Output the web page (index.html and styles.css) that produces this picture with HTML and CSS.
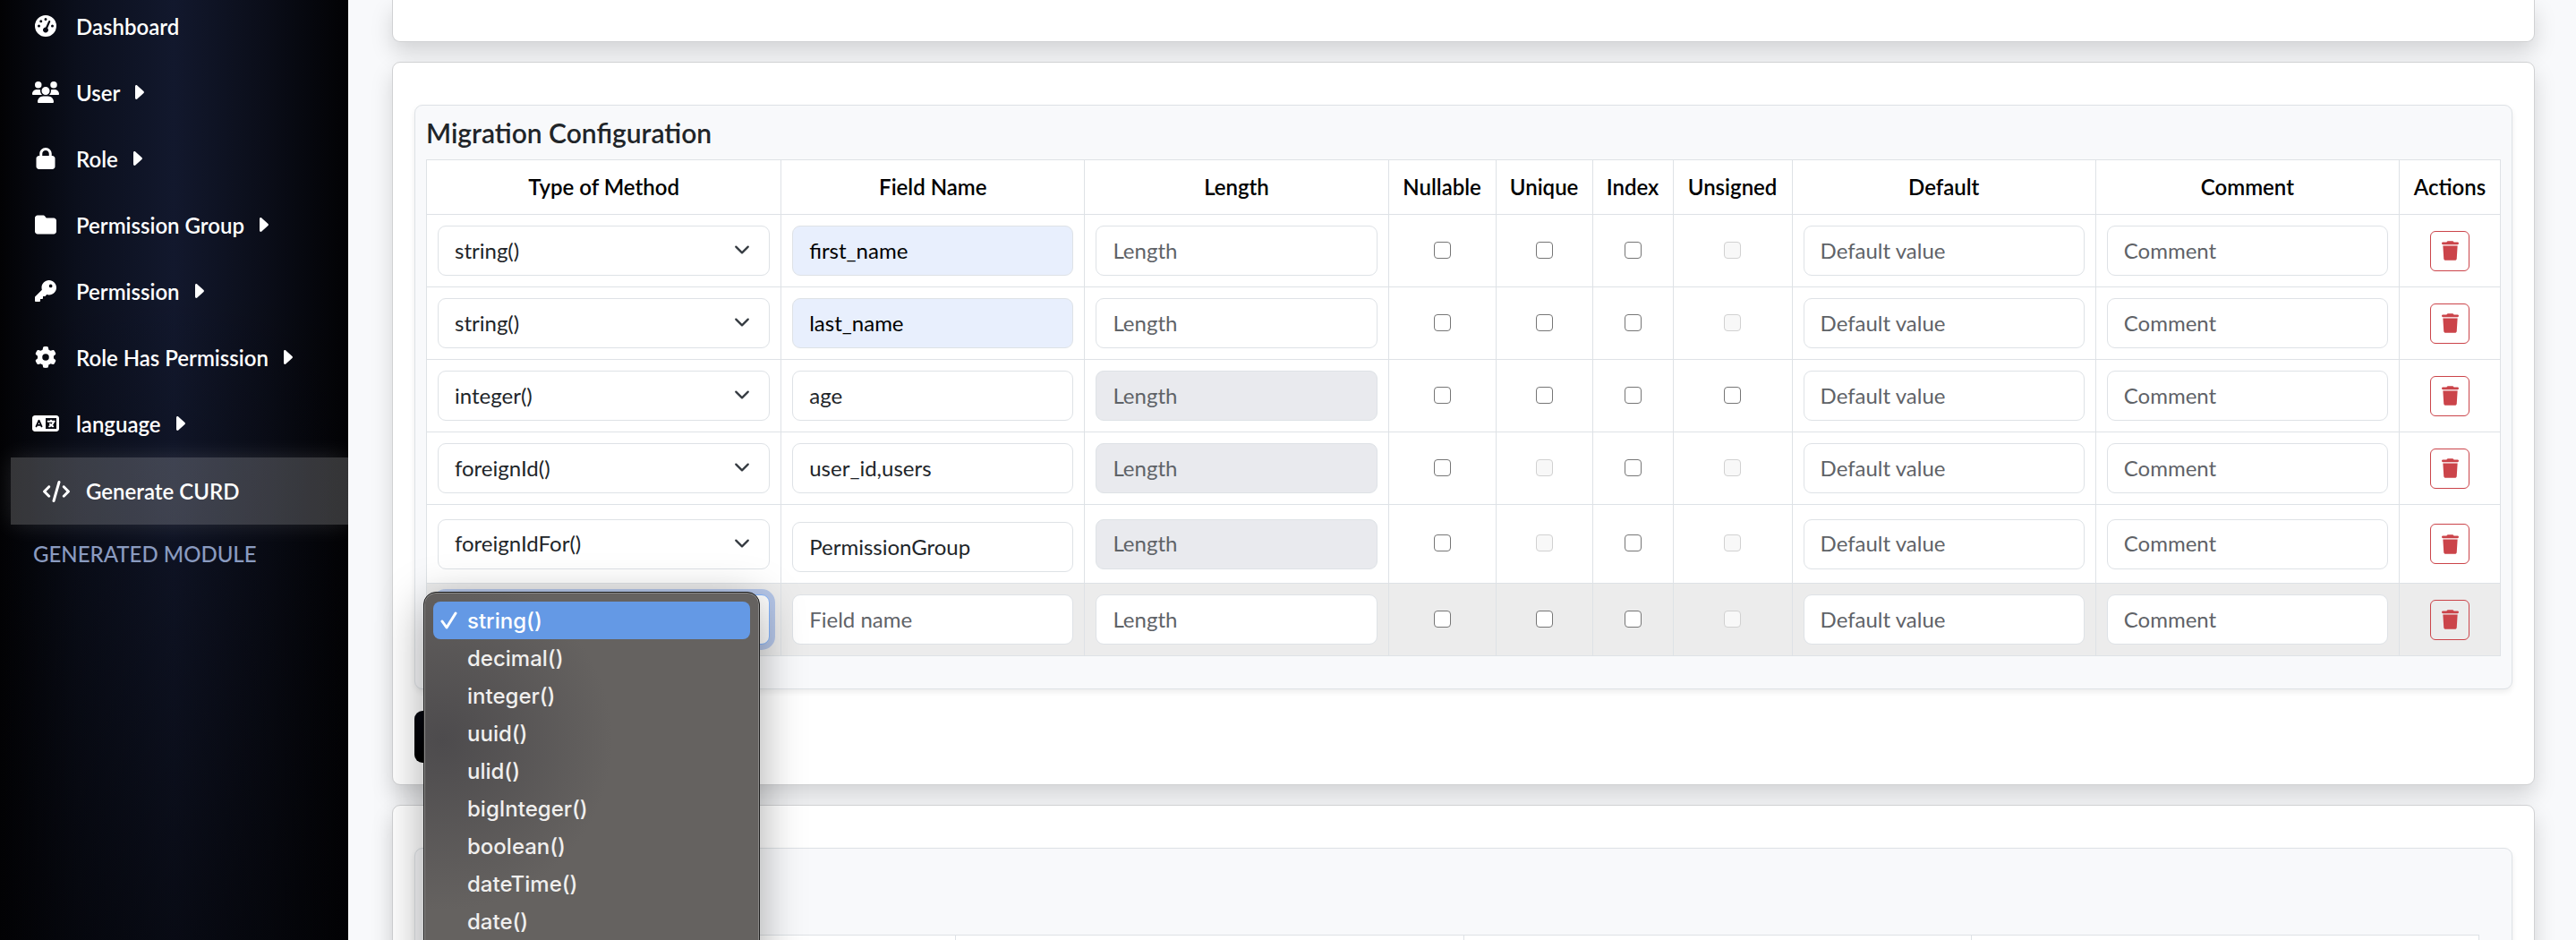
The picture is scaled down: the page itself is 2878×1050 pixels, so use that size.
FILE: index.html
```html
<!DOCTYPE html>
<html lang="en">
<head>
<meta charset="utf-8">
<title>Generate CURD</title>
<link rel="stylesheet" href="styles.css">
</head>
<body>
<svg class="sprite" aria-hidden="true">
  <symbol id="i-gauge" viewBox="0 0 512 512"><path fill-rule="evenodd" d="M0 256a256 256 0 1 1 512 0A256 256 0 1 1 0 256zM288 96a32 32 0 1 0-64 0 32 32 0 1 0 64 0zM256 416c35.300 0 64-28.700 64-64 0-17.400-6.900-33.100-18.100-44.600L366 161.700c5.300-12.100-.2-26.300-12.300-31.600s-26.300.2-31.600 12.300L257.900 288c-.6 0-1.300 0-1.900 0-35.300 0-64 28.700-64 64s28.700 64 64 64zM176 144a32 32 0 1 0-64 0 32 32 0 1 0 64 0zM96 288a32 32 0 1 0 0-64 32 32 0 1 0 0 64zm352-32a32 32 0 1 0-64 0 32 32 0 1 0 64 0z"/></symbol>
  <symbol id="i-users" viewBox="0 0 640 512"><path d="M144 0a80 80 0 1 1 0 160A80 80 0 1 1 144 0zM512 0a80 80 0 1 1 0 160A80 80 0 1 1 512 0zM0 298.700C0 239.800 47.800 192 106.700 192h42.700c15.900 0 31 3.500 44.600 9.700-1.300 7.200-1.900 14.700-1.900 22.300 0 38.200 16.800 72.500 43.300 96H21.300C9.600 320 0 310.400 0 298.700zM405.300 320h-.7c26.600-23.500 43.300-57.800 43.300-96 0-7.600-.7-15-1.900-22.300 13.600-6.300 28.700-9.700 44.600-9.700h42.700C592.200 192 640 239.800 640 298.700c0 11.800-9.600 21.300-21.300 21.300H405.300zM224 224a96 96 0 1 1 192 0 96 96 0 1 1-192 0zM128 485.300C128 411.700 187.700 352 261.300 352h117.400C452.300 352 512 411.700 512 485.300c0 14.700-11.900 26.700-26.700 26.700H154.700c-14.700 0-26.700-11.900-26.700-26.700z"/></symbol>
  <symbol id="i-lock" viewBox="0 0 448 512"><path fill-rule="evenodd" d="M144 144v48h160v-48c0-44.200-35.800-80-80-80s-80 35.800-80 80zm-64 48v-48C80 64.500 144.500 0 224 0s144 64.500 144 144v48h16c35.300 0 64 28.700 64 64v192c0 35.300-28.700 64-64 64H64c-35.300 0-64-28.700-64-64V256c0-35.300 28.700-64 64-64h16z"/></symbol>
  <symbol id="i-folder" viewBox="0 0 512 512"><path d="M64 480h384c35.300 0 64-28.700 64-64V160c0-35.300-28.700-64-64-64H288c-10.100 0-19.600-4.700-25.600-12.800L243.200 57.600C231.100 41.500 212.100 32 192 32H64C28.700 32 0 60.700 0 96v320c0 35.300 28.700 64 64 64z"/></symbol>
  <symbol id="i-key" viewBox="0 0 512 512"><path fill-rule="evenodd" d="M336 352c97.200 0 176-78.800 176-176S433.200 0 336 0 160 78.800 160 176c0 18.700 2.900 36.800 8.300 53.700L7 391c-4.500 4.500-7 10.600-7 17v80c0 13.300 10.700 24 24 24h80c13.300 0 24-10.700 24-24v-40h40c13.300 0 24-10.700 24-24v-40h40c6.400 0 12.500-2.500 17-7l33.300-33.300c16.900 5.400 35 8.300 53.700 8.300zM376 96a40 40 0 1 1 0 80 40 40 0 1 1 0-80z"/></symbol>
  <symbol id="i-gear" viewBox="0 0 512 512"><path fill-rule="evenodd" d="M495.900 166.600c3.200 8.700.5 18.400-6.400 24.600l-43.300 39.400c1.100 8.300 1.700 16.800 1.700 25.400s-.6 17.100-1.700 25.400l43.300 39.400c6.900 6.200 9.600 15.900 6.400 24.600-4.400 11.900-9.700 23.300-15.800 34.300l-4.700 8.100c-6.600 11-14 21.400-22.100 31.200-5.900 7.200-15.700 9.600-24.500 6.800l-55.700-17.700c-13.400 10.300-28.200 18.900-44 25.400l-12.500 57.100c-2 9.100-9 16.300-18.200 17.800-13.800 2.300-28 3.500-42.500 3.500s-28.700-1.200-42.500-3.500c-9.200-1.500-16.200-8.700-18.200-17.800l-12.500-57.100c-15.800-6.500-30.600-15.100-44-25.400L83.100 425.900c-8.800 2.800-18.600.3-24.500-6.800-8.100-9.800-15.500-20.200-22.100-31.200l-4.700-8.100c-6.100-11-11.400-22.400-15.800-34.300-3.200-8.700-.5-18.400 6.400-24.600l43.300-39.400C64.600 273.100 64 264.600 64 256s.6-17.100 1.700-25.400L22.400 191.200c-6.900-6.200-9.600-15.900-6.400-24.600 4.400-11.900 9.700-23.300 15.800-34.300l4.700-8.100c6.600-11 14-21.400 22.100-31.200 5.900-7.200 15.700-9.600 24.500-6.800l55.700 17.700c13.400-10.300 28.200-18.900 44-25.400l12.500-57.100c2-9.100 9-16.300 18.200-17.800C227.300 1.200 241.500 0 256 0s28.700 1.200 42.500 3.500c9.200 1.500 16.200 8.700 18.200 17.800l12.500 57.100c15.800 6.500 30.600 15.100 44 25.400l55.700-17.700c8.800-2.800 18.600-.3 24.500 6.800 8.100 9.800 15.500 20.200 22.100 31.200l4.700 8.100c6.100 11 11.400 22.400 15.800 34.300zM256 336a80 80 0 1 0 0-160 80 80 0 1 0 0 160z"/></symbol>
  <symbol id="i-language" viewBox="0 0 640 512"><path fill-rule="evenodd" d="M0 128C0 92.700 28.700 64 64 64h512c35.300 0 64 28.700 64 64v256c0 35.300-28.700 64-64 64H64c-35.300 0-64-28.700-64-64V128zm320 0v256h256V128H320zM178.300 175.900c-3.200-7.200-10.400-11.900-18.300-11.900s-15.100 4.700-18.300 11.900l-64 144c-4.500 10.100.1 21.900 10.200 26.400s21.900-.1 26.400-10.200l8.900-20.100h73.600l8.900 20.100c4.500 10.100 16.300 14.600 26.400 10.200s14.600-16.300 10.200-26.400l-64-144zM160 233.200 179 276h-38l19-42.800zM448 164c11 0 20 9 20 20v4h60c11 0 20 9 20 20s-9 20-20 20h-2l-1.600 4.500c-8.900 24.400-22.400 46.600-39.600 65.400.9.600 1.800 1.100 2.700 1.600l18.900 11.300c9.500 5.700 12.500 18 6.900 27.400s-18 12.500-27.400 6.900l-18.900-11.300c-4.500-2.700-8.800-5.500-13.100-8.500-10.600 7.500-21.900 14-34 19.400l-3.600 1.600c-10.100 4.500-21.900-.1-26.400-10.200s.1-21.900 10.200-26.400l3.600-1.600c6.400-2.900 12.600-6.100 18.500-9.800L410 286.100c-7.800-7.800-7.800-20.500 0-28.300s20.500-7.800 28.300 0l14.600 14.600.5.500c12.400-13.100 22.500-28.300 29.800-45H376c-11 0-20-9-20-20s9-20 20-20h52v-4c0-11 9-20 20-20z"/></symbol>
  <symbol id="i-code" viewBox="0 0 640 512"><path d="M392.800 1.200c-17-4.900-34.700 5-39.600 22l-128 448c-4.900 17 5 34.700 22 39.600s34.700-5 39.600-22l128-448c4.900-17-5-34.700-22-39.600zm80.600 120.100c-12.500 12.500-12.500 32.800 0 45.300l89.300 89.400-89.400 89.400c-12.500 12.500-12.500 32.800 0 45.300s32.800 12.500 45.300 0l112-112c12.500-12.500 12.500-32.800 0-45.300l-112-112c-12.500-12.500-32.800-12.500-45.300 0zm-306.700 0c-12.500-12.500-32.800-12.500-45.300 0l-112 112c-12.500 12.500-12.500 32.800 0 45.300l112 112c12.500 12.500 32.800 12.500 45.300 0s12.500-32.800 0-45.300L77.300 256l89.400-89.400c12.500-12.500 12.500-32.800 0-45.300z"/></symbol>
  <symbol id="i-caret" viewBox="0 0 10 16"><path d="M0 1.500v13c0 1.200 1.300 1.900 2.300 1L9.500 9c.6-.6.6-1.400 0-2L2.300.5C1.300-.4 0 .3 0 1.500z"/></symbol>
  <symbol id="i-trash" viewBox="0 0 448 512"><path d="M135.200 17.700 128 32H32C14.300 32 0 46.300 0 64s14.300 32 32 32h384c17.700 0 32-14.300 32-32s-14.300-32-32-32h-96l-7.200-14.300C307.400 6.800 296.300 0 284.200 0H163.800c-12.100 0-23.200 6.800-28.600 17.700zM416 128H32l21.200 339c1.600 25.300 22.600 45 47.900 45h245.800c25.300 0 46.300-19.700 47.900-45L416 128z"/></symbol>
  <symbol id="i-chevron" viewBox="0 0 16 16"><path fill="none" stroke="#343a40" stroke-linecap="round" stroke-linejoin="round" stroke-width="2" d="m2 5 6 6 6-6"/></symbol>
  <symbol id="i-check" viewBox="0 0 20 20"><path fill="none" stroke="#fff" stroke-linecap="round" stroke-linejoin="round" stroke-width="3" d="m2 11 5 7L17 2"/></symbol>
</svg>

<div class="app">
  <nav class="sidebar" aria-label="Main">
    <a class="nav-link" href="#"><svg class="nav-icon"><use href="#i-gauge"/></svg><span>Dashboard</span></a>
    <a class="nav-link" href="#"><svg class="nav-icon"><use href="#i-users"/></svg><span>User</span><svg class="caret"><use href="#i-caret"/></svg></a>
    <a class="nav-link" href="#"><svg class="nav-icon"><use href="#i-lock"/></svg><span>Role</span><svg class="caret"><use href="#i-caret"/></svg></a>
    <a class="nav-link" href="#"><svg class="nav-icon"><use href="#i-folder"/></svg><span>Permission Group</span><svg class="caret"><use href="#i-caret"/></svg></a>
    <a class="nav-link" href="#"><svg class="nav-icon"><use href="#i-key"/></svg><span>Permission</span><svg class="caret"><use href="#i-caret"/></svg></a>
    <a class="nav-link" href="#"><svg class="nav-icon"><use href="#i-gear"/></svg><span>Role Has Permission</span><svg class="caret"><use href="#i-caret"/></svg></a>
    <a class="nav-link" href="#"><svg class="nav-icon"><use href="#i-language"/></svg><span>language</span><svg class="caret"><use href="#i-caret"/></svg></a>
    <a class="nav-link active" href="#" aria-current="page"><svg class="nav-icon"><use href="#i-code"/></svg><span>Generate CURD</span></a>
    <h2 class="nav-heading">GENERATED MODULE</h2>
  </nav>

  <main class="content">
    <section class="card card-top"></section>

    <section class="card">
      <div class="panel">
        <h1 class="panel-title">Migration Configuration</h1>
        <table class="fields">
          <colgroup>
            <col class="c-type"><col><col>
            <col class="c-nullable"><col class="c-unique"><col class="c-index"><col class="c-unsigned">
            <col><col><col class="c-actions">
          </colgroup>
          <thead>
            <tr><th>Type of Method</th><th>Field Name</th><th>Length</th><th>Nullable</th><th>Unique</th><th>Index</th><th>Unsigned</th><th>Default</th><th>Comment</th><th>Actions</th></tr>
          </thead>
          <tbody>
            <tr>
              <td><div class="select"><select class="control" aria-label="Type of Method"><option>string()</option></select><svg class="chevron"><use href="#i-chevron"/></svg></div></td>
              <td><input class="control autofilled" type="text" aria-label="Field Name" placeholder="Field name" value="first_name"></td>
              <td><input class="control" type="text" aria-label="Length" placeholder="Length"></td>
              <td><input class="tick" type="checkbox" aria-label="Nullable"></td>
              <td><input class="tick" type="checkbox" aria-label="Unique"></td>
              <td><input class="tick" type="checkbox" aria-label="Index"></td>
              <td><input class="tick" type="checkbox" aria-label="Unsigned" disabled></td>
              <td><input class="control" type="text" aria-label="Default" placeholder="Default value"></td>
              <td><input class="control" type="text" aria-label="Comment" placeholder="Comment"></td>
              <td><button class="delete" type="button" aria-label="Delete row"><svg><use href="#i-trash"/></svg></button></td>
            </tr>
            <tr>
              <td><div class="select"><select class="control" aria-label="Type of Method"><option>string()</option></select><svg class="chevron"><use href="#i-chevron"/></svg></div></td>
              <td><input class="control autofilled" type="text" aria-label="Field Name" placeholder="Field name" value="last_name"></td>
              <td><input class="control" type="text" aria-label="Length" placeholder="Length"></td>
              <td><input class="tick" type="checkbox" aria-label="Nullable"></td>
              <td><input class="tick" type="checkbox" aria-label="Unique"></td>
              <td><input class="tick" type="checkbox" aria-label="Index"></td>
              <td><input class="tick" type="checkbox" aria-label="Unsigned" disabled></td>
              <td><input class="control" type="text" aria-label="Default" placeholder="Default value"></td>
              <td><input class="control" type="text" aria-label="Comment" placeholder="Comment"></td>
              <td><button class="delete" type="button" aria-label="Delete row"><svg><use href="#i-trash"/></svg></button></td>
            </tr>
            <tr>
              <td><div class="select"><select class="control" aria-label="Type of Method"><option>integer()</option></select><svg class="chevron"><use href="#i-chevron"/></svg></div></td>
              <td><input class="control" type="text" aria-label="Field Name" placeholder="Field name" value="age"></td>
              <td><input class="control" type="text" aria-label="Length" placeholder="Length" disabled></td>
              <td><input class="tick" type="checkbox" aria-label="Nullable"></td>
              <td><input class="tick" type="checkbox" aria-label="Unique"></td>
              <td><input class="tick" type="checkbox" aria-label="Index"></td>
              <td><input class="tick" type="checkbox" aria-label="Unsigned"></td>
              <td><input class="control" type="text" aria-label="Default" placeholder="Default value"></td>
              <td><input class="control" type="text" aria-label="Comment" placeholder="Comment"></td>
              <td><button class="delete" type="button" aria-label="Delete row"><svg><use href="#i-trash"/></svg></button></td>
            </tr>
            <tr>
              <td><div class="select"><select class="control" aria-label="Type of Method"><option>foreignId()</option></select><svg class="chevron"><use href="#i-chevron"/></svg></div></td>
              <td><input class="control" type="text" aria-label="Field Name" placeholder="Field name" value="user_id,users"></td>
              <td><input class="control" type="text" aria-label="Length" placeholder="Length" disabled></td>
              <td><input class="tick" type="checkbox" aria-label="Nullable"></td>
              <td><input class="tick" type="checkbox" aria-label="Unique" disabled></td>
              <td><input class="tick" type="checkbox" aria-label="Index"></td>
              <td><input class="tick" type="checkbox" aria-label="Unsigned" disabled></td>
              <td><input class="control" type="text" aria-label="Default" placeholder="Default value"></td>
              <td><input class="control" type="text" aria-label="Comment" placeholder="Comment"></td>
              <td><button class="delete" type="button" aria-label="Delete row"><svg><use href="#i-trash"/></svg></button></td>
            </tr>
            <tr>
              <td><div class="select"><select class="control" aria-label="Type of Method"><option>foreignIdFor()</option></select><svg class="chevron"><use href="#i-chevron"/></svg></div></td>
              <td class="model-cell"><input class="control" type="text" aria-label="Field Name" placeholder="Field name" value="PermissionGroup"></td>
              <td><input class="control" type="text" aria-label="Length" placeholder="Length" disabled></td>
              <td><input class="tick" type="checkbox" aria-label="Nullable"></td>
              <td><input class="tick" type="checkbox" aria-label="Unique" disabled></td>
              <td><input class="tick" type="checkbox" aria-label="Index"></td>
              <td><input class="tick" type="checkbox" aria-label="Unsigned" disabled></td>
              <td><input class="control" type="text" aria-label="Default" placeholder="Default value"></td>
              <td><input class="control" type="text" aria-label="Comment" placeholder="Comment"></td>
              <td><button class="delete" type="button" aria-label="Delete row"><svg><use href="#i-trash"/></svg></button></td>
            </tr>
            <tr class="hovered">
              <td>
                <div class="select">
                  <button class="control open" type="button" aria-haspopup="listbox" aria-expanded="true" aria-label="Type of Method"></button>
                  <ul class="menu" role="listbox" aria-label="Type of Method">
                    <li class="option selected" role="option" aria-selected="true"><svg class="check"><use href="#i-check"/></svg>string()</li>
                    <li class="option" role="option">decimal()</li>
                    <li class="option" role="option">integer()</li>
                    <li class="option" role="option">uuid()</li>
                    <li class="option" role="option">ulid()</li>
                    <li class="option" role="option">bigInteger()</li>
                    <li class="option" role="option">boolean()</li>
                    <li class="option" role="option">dateTime()</li>
                    <li class="option" role="option">date()</li>
                  </ul>
                </div>
              </td>
              <td><input class="control" type="text" aria-label="Field Name" placeholder="Field name"></td>
              <td><input class="control" type="text" aria-label="Length" placeholder="Length"></td>
              <td><input class="tick" type="checkbox" aria-label="Nullable"></td>
              <td><input class="tick" type="checkbox" aria-label="Unique"></td>
              <td><input class="tick" type="checkbox" aria-label="Index"></td>
              <td><input class="tick" type="checkbox" aria-label="Unsigned" disabled></td>
              <td><input class="control" type="text" aria-label="Default" placeholder="Default value"></td>
              <td><input class="control" type="text" aria-label="Comment" placeholder="Comment"></td>
              <td><button class="delete" type="button" aria-label="Delete row"><svg><use href="#i-trash"/></svg></button></td>
            </tr>
          </tbody>
        </table>
      </div>
      <button class="add" type="button" aria-label="Add field"></button>
    </section>

    <section class="card">
      <div class="panel panel-next">
        <table class="next-table"><tbody><tr><td></td><td></td><td></td><td></td></tr></tbody></table>
      </div>
    </section>
  </main>
</div>
</body>
</html>
```

FILE: styles.css
```css
*, *::before, *::after { box-sizing: border-box; }

body {
  margin: 0;
  font-family: Lato, "Liberation Sans", sans-serif;
  font-size: 24px;
  color: #212529;
  background: #f8f9fb;
}

svg { fill: currentColor; flex: none; }
.sprite { display: none; }

.app {
  display: flex;
  height: 100vh;
  overflow: hidden;
}

/* Sidebar */
.sidebar {
  flex: 0 0 389px;
  display: flex;
  flex-direction: column;
  background:
    linear-gradient(180deg, rgba(2, 2, 4, 0) 30%, rgba(2, 2, 4, 0.6) 100%),
    linear-gradient(90deg, #020204 0%, #0b0f1c 22%, #12182d 50%, #0b0e1a 75%, #020204 100%);
}
.nav-link {
  display: flex;
  align-items: center;
  height: 74px;
  padding-left: 36px;
  color: #fff;
  font-weight: 600;
  text-decoration: none;
}
.nav-link:first-child { margin-top: -8px; }
.nav-icon { width: 30px; height: 24px; margin-right: 19px; }
.caret { width: 10px; height: 16px; margin-left: 17px; }
.nav-link.active {
  height: 75px;
  margin: 1px 0 0 12px;
  background: rgba(255, 255, 255, 0.2);
  box-shadow: 0 0 24px rgba(255, 255, 255, 0.12);
}
.nav-link.active .nav-icon { margin-right: 18px; }
.nav-heading {
  margin: 18px 0 0 37px;
  font-size: 24px;
  font-weight: 500;
  line-height: 30px;
  color: #8a9bc0;
}

/* Cards */
.content { flex: 1; min-width: 0; padding: 0 46px 0 49px; }
.card {
  margin-bottom: 22px;
  padding: 47px 24px 24px;
  border: 1px solid #d0d1d3;
  border-radius: 9px;
  background: #fff;
  box-shadow: 0 12px 24px rgba(0, 0, 0, 0.15);
}
.card-top {
  padding: 23px;
  border-top: 0;
  border-radius: 0 0 9px 9px;
}
.panel {
  padding: 12px 12px 36px;
  border: 1px solid #dee2e6;
  border-radius: 9px;
  background: #f8f9fb;
  box-shadow: 0 3px 6px rgba(0, 0, 0, 0.075);
}
.panel-title {
  margin: 0 0 12px;
  font-size: 30px;
  font-weight: 600;
  line-height: 36px;
}

/* Field table */
.fields {
  width: 100%;
  table-layout: fixed;
  border-collapse: collapse;
  background: #fff;
}
.c-type { width: 17.1%; }
.c-nullable { width: 120px; }
.c-unique { width: 108px; }
.c-index { width: 90px; }
.c-unsigned { width: 133px; }
.c-actions { width: 113px; }
.fields th, .fields td {
  border: 1px solid #dee2e6;
  padding: 12px;
  text-align: center;
  vertical-align: middle;
}
.fields th {
  padding: 12px 0;
  line-height: 36px;
  font-weight: 600;
  color: #000;
}
.model-cell::before { content: ""; display: block; height: 7px; }
.hovered { background: #ececec; }

.control {
  display: block;
  width: 100%;
  height: 56px;
  margin: 0;
  padding: 0 18px 2px;
  border: 1px solid #dee2e6;
  border-radius: 9px;
  background: #fff;
  font: inherit;
  color: #212529;
  appearance: none;
}
.control::placeholder { color: #5f6368; opacity: 1; }
.control:disabled { background: #e9eaee; }
.control.autofilled { background: #e8effd; color: #000; }
.control.open { border-color: #86b7fe; box-shadow: 0 0 0 6px #b5c6e8; }

.select { position: relative; }
.chevron {
  position: absolute;
  top: 18px;
  right: 22px;
  width: 18px;
  height: 18px;
  pointer-events: none;
}
.tick {
  display: block;
  width: 19px;
  height: 19px;
  margin: 0 auto 2px;
  border: 1px solid #767676;
  border-radius: 4px;
  background: #fff;
  appearance: none;
}
.tick:checked { border-color: #0d6efd; background: #0d6efd; }
.tick:disabled { border-color: #d1d1d1; background: #f8f8f8; }
.delete {
  display: flex;
  align-items: center;
  justify-content: center;
  width: 44px;
  height: 45px;
  margin: 0 auto;
  padding: 0;
  border: 1px solid #cb444a;
  border-radius: 6px;
  background: transparent;
  color: #cb444a;
}
.delete svg { width: 19px; height: 22px; }

.add {
  display: block;
  width: 240px;
  height: 58px;
  margin-top: 24px;
  border: 0;
  border-radius: 9px;
  background: linear-gradient(#05060f, #000);
}

/* Open drop-down list */
.menu {
  position: absolute;
  z-index: 2;
  top: -3px;
  left: -16px;
  width: 376px;
  height: 480px;
  margin: 0;
  padding: 10px;
  list-style: none;
  border: 1px solid #1c1c1c;
  border-radius: 14px;
  background: radial-gradient(ellipse 190px 190px at 20px 165px, #4d4b4d, #656260);
  box-shadow: inset 0 0 0 1px #8b8a89, 0 12px 50px rgba(0, 0, 0, 0.35);
  font-family: Inter, "Liberation Sans", sans-serif;
  font-weight: 500;
  text-align: left;
  color: #f0efee;
}
.option {
  display: flex;
  align-items: center;
  height: 42px;
  padding-left: 38px;
  border-radius: 8px;
}
.option.selected { padding-left: 8px; background: #6499e5; color: #fff; }
.check { width: 20px; height: 20px; margin-right: 10px; }

/* Following section */
.panel-next { padding: 96px 36px 36px; }
.next-table {
  width: 100%;
  table-layout: fixed;
  border-collapse: collapse;
  background: #fff;
}
.next-table td { height: 62px; border: 1px solid #dee2e6; }
```
